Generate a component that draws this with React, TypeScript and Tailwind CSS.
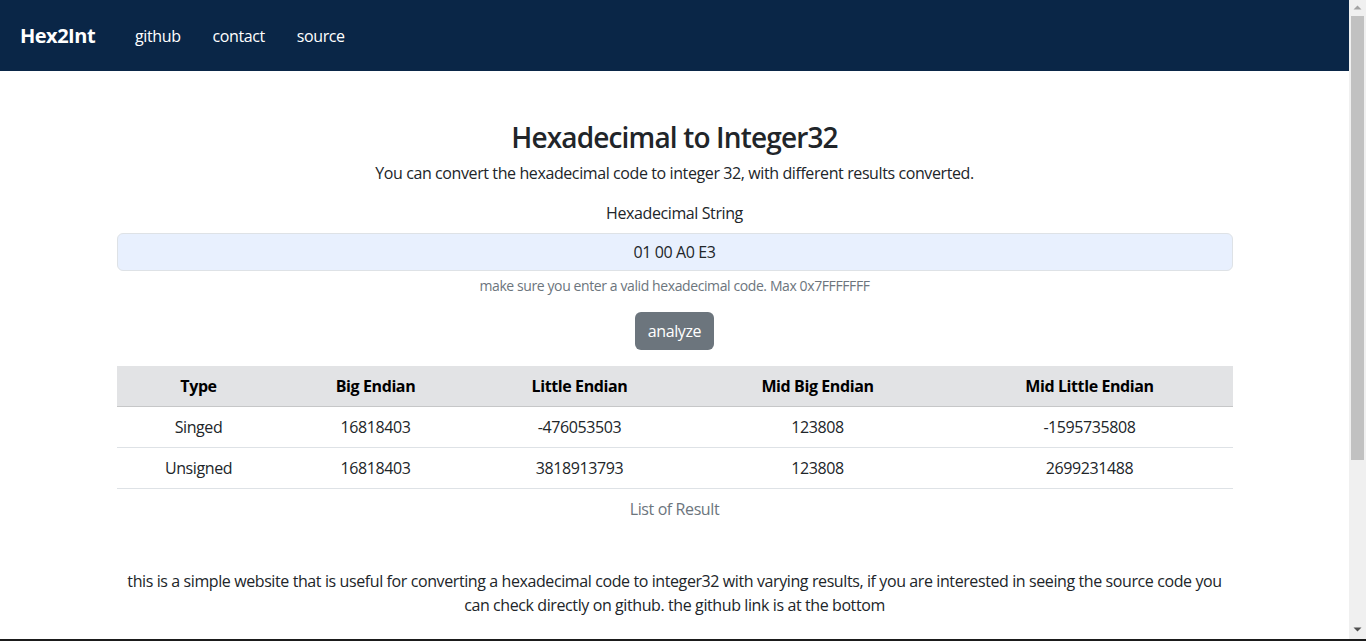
import React from "react";

const font = { fontFamily: '"Open Sans", "Noto Sans", sans-serif' };

export default function App() {
  const rows = [
    ["Singed", "16818403", "-476053503", "123808", "-1595735808"],
    ["Unsigned", "16818403", "3818913793", "123808", "2699231488"],
  ];
  const widths = ["w-[164px]", "w-[190px]", "w-[218px]", "w-[258px]", "w-[286px]"];
  return (
    <div className="flex flex-col h-[641px] w-[1366px] overflow-hidden bg-white text-[#212529]" style={font}>
      <div className="flex flex-row h-[639px]">
        <div className="w-[1349px] h-[639px] overflow-hidden flex flex-col">
          <nav className="h-[71px] bg-[#0a2647] flex items-center px-[20px] shrink-0">
            <span className="text-white font-bold text-[20px] tracking-[-0.5px] mr-[40px]">Hex2Int</span>
            <span className="text-white text-[16px] tracking-[-0.4px] mr-[32px]">github</span>
            <span className="text-white text-[16px] tracking-[-0.4px] mr-[32px]">contact</span>
            <span className="text-white text-[16px] tracking-[-0.4px]">source</span>
          </nav>
          <main className="w-[1116px] mx-auto pt-[49px] text-center tracking-[-0.4px]">
            <h3 className="text-[28px] font-semibold leading-[34px] mb-[7px] text-[#212529] tracking-[-0.85px]">Hexadecimal to Integer32</h3>
            <p className="text-[16px] leading-[24px] mb-[16px]">You can convert the hexadecimal code to integer 32, with different results converted.</p>
            <div className="text-[16px] leading-[24px] mb-[8px]">Hexadecimal String</div>
            <div className="h-[38px] rounded-[6px] border border-[#dee2e6] bg-[#e8f0fe] flex items-center justify-center text-[16px]">01 00 A0 E3</div>
            <div className="text-[14px] leading-[21px] mt-[4px] text-[#6c757d]">make sure you enter a valid hexadecimal code. Max 0x7FFFFFFF</div>
            <div className="flex justify-center mt-[16px]">
              <div className="h-[38px] px-[13px] rounded-[6px] bg-[#6c757d] text-white text-[16px] flex items-center">analyze</div>
            </div>
            <table className="w-[1116px] mt-[16px] border-collapse table-fixed">
              <thead>
                <tr className="bg-[#e2e3e5] border-b border-[#c6c7c8]">
                  {["Type", "Big Endian", "Little Endian", "Mid Big Endian", "Mid Little Endian"].map((h, i) => (
                    <th key={h} className={`${widths[i]} h-[40px] py-0 text-[16px] font-bold text-black`}>{h}</th>
                  ))}
                </tr>
              </thead>
              <tbody>
                {rows.map((r) => (
                  <tr key={r[0]} className="border-b border-[#dee2e6]">
                    {r.map((c, i) => (
                      <td key={i} className="h-[41px] py-0 pt-[1px] text-[16px] text-[#212529]">{c}</td>
                    ))}
                  </tr>
                ))}
              </tbody>
            </table>
            <div className="text-[16px] leading-[24px] pt-[8px] text-[#6c757d]">List of Result</div>
            <p className="text-[16px] leading-[24px] mt-[48px]">
              <span className="block whitespace-nowrap">this is a simple website that is useful for converting a hexadecimal code to integer32 with varying results, if you are interested in seeing the source code you</span>
              <span className="block whitespace-nowrap">can check directly on github. the github link is at the bottom</span>
            </p>
          </main>
        </div>
        <div className="w-[17px] h-[639px] bg-[#f0f0f0] flex flex-col items-center">
          <svg width="17" height="16" viewBox="0 0 17 16" className="shrink-0">
            <path d="M4.5 9.5 L8.5 5.5 L12.5 9.5 Z" fill="#a3a3a3" />
          </svg>
          <div className="w-[13px] h-[444px] bg-[#c1c1c1]" />
          <div className="flex-1" />
          <svg width="17" height="16" viewBox="0 0 17 16" className="shrink-0 mb-[2px]">
            <path d="M4.5 6.5 L8.5 10.5 L12.5 6.5 Z" fill="#505050" />
          </svg>
        </div>
      </div>
      <div className="h-[2px] bg-[#1b1b1b]" />
    </div>
  );
}
